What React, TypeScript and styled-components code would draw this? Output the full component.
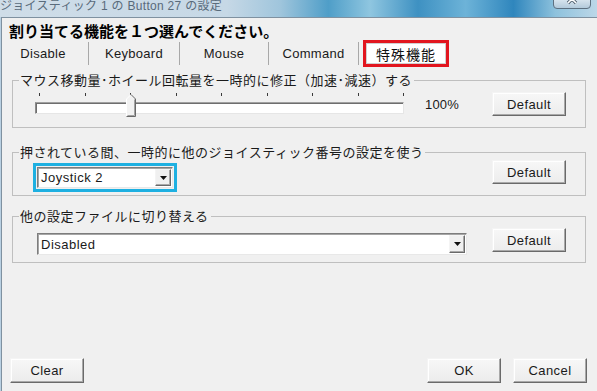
import React from "react";
import styled, { createGlobalStyle } from "styled-components";

const GlobalStyle = createGlobalStyle`
  html, body {
    margin: 0;
    padding: 0;
    background: #f0f0f0;
  }
  body {
    font-family: "Liberation Sans", "Noto Sans CJK JP", sans-serif;
    color: #111;
  }
`;

const Window = styled.div`
  width: 597px;
  height: 391px;
  overflow: hidden;
  display: flex;
  flex-direction: column;
  background: #b9d0e2;
`;

const TitleBar = styled.div`
  height: 17px;
  flex-shrink: 0;
  display: flex;
  align-items: flex-start;
  overflow: hidden;
  background: linear-gradient(
    90deg,
    #cfdde8 0%,
    #c6d8e6 38%,
    #9fc5dc 47%,
    #4f9ec8 55%,
    #8fc6e0 62%,
    #3e91c2 70%,
    #6db3d8 78%,
    #2f86bd 86%,
    #8ec2dd 93%,
    #bcd7e8 100%
  );
`;

const TitleText = styled.div`
  margin-top: 0;
  font-size: 12px;
  line-height: 12px;
  color: #596b7b;
  white-space: nowrap;
  letter-spacing: 0.3px;
`;

const CloseButton = styled.div`
  margin-left: auto;
  margin-right: 6px;
  margin-top: -4px;
  width: 36px;
  height: 11px;
  border: 1px solid #5d7080;
  border-radius: 0 0 4px 4px;
  background: linear-gradient(#e3edf4, #b3cadb);
  display: flex;
  align-items: flex-start;
  justify-content: center;
`;

const Client = styled.div`
  flex: 1;
  min-height: 0;
  display: flex;
  flex-direction: column;
  margin-left: 1px;
  border-left: 1px solid #7f91a0;
  border-top: 1px solid #7f91a0;
  background: #f0f0f0;
`;

const Header = styled.div`
  margin: 3px 0 0 7px;
  height: 19px;
  font-size: 15px;
  line-height: 19px;
  font-weight: bold;
  color: #000;
  font-family: "Noto Sans CJK JP", sans-serif;
`;

const TabStrip = styled.div`
  display: flex;
  align-items: center;
  height: 27px;
  margin-left: -1px;
`;

const Tab = styled.div<{ $w: number; $shift?: number }>`
  width: ${({ $w }) => $w}px;
  height: 23px;
  box-sizing: border-box;
  padding-right: ${({ $shift = 0 }) => $shift}px;
  border-right: 1px solid #a8a8a8;
  display: flex;
  align-items: center;
  justify-content: center;
  font-size: 13px;
  letter-spacing: 0.3px;
  color: #1a1a1a;
`;

const SelectedTab = styled.div`
  margin-left: 4px;
  width: 86px;
  height: 27px;
  box-sizing: border-box;
  border: 3px solid #e2161f;
  background: #fff;
  box-shadow: inset 0 0 0 1px #d0d0d0;
  display: flex;
  align-items: center;
  justify-content: center;
  font-family: "Noto Sans CJK JP", sans-serif;
  font-size: 14px;
  letter-spacing: 1px;
  color: #111;
`;

const Group = styled.fieldset<{ $mt: number; $pt: number; $pb: number }>`
  margin: ${({ $mt }) => $mt}px 11px 0 10px;
  padding: ${({ $pt }) => $pt}px 19px ${({ $pb }) => $pb}px 0;
  border: 1px solid #bfbfbf;
  min-width: 0;
`;

const Legend = styled.legend`
  margin-left: 6px;
  padding: 0 2px 0 1px;
  font-family: "Noto Sans CJK JP", sans-serif;
  font-size: 13px;
  line-height: 16px;
  letter-spacing: 0.5px;
  color: #1a1a1a;
`;

const Row = styled.div<{ $h: number }>`
  display: flex;
  align-items: flex-start;
  height: ${({ $h }) => $h}px;
`;

const Slider = styled.div`
  position: relative;
  width: 369px;
  height: 24px;
  margin: 1px 0 0 22px;
`;

const Ticks = styled.div`
  display: flex;
  justify-content: space-between;
  margin-left: 4px;
  height: 3px;
`;

const Tick = styled.span`
  width: 1px;
  height: 3px;
  background: #3a3a3a;
`;

const Track = styled.div`
  margin-top: 6px;
  height: 12px;
  box-sizing: border-box;
  background: #fff;
  border: 1px solid;
  border-color: #a0a0a0 #e6e6e6 #e6e6e6 #8a8a8a;
  box-shadow: inset 1px 1px #6e6e6e;
`;

const Thumb = styled.div`
  position: absolute;
  left: 91px;
  top: 1px;
  width: 10px;
  height: 23px;
  line-height: 0;
`;

const Percent = styled.div`
  margin-left: 21px;
  line-height: 25px;
  font-size: 13px;
  letter-spacing: 0.2px;
  color: #1a1a1a;
`;

const Button = styled.button<{ $h?: number; $mt?: number }>`
  width: 74px;
  height: ${({ $h = 24 }) => $h}px;
  margin-top: ${({ $mt = 0 }) => $mt}px;
  box-sizing: border-box;
  padding: 0;
  font-family: "Liberation Sans", sans-serif;
  font-size: 13px;
  font-weight: 400;
  letter-spacing: 0.4px;
  color: #1a1a1a;
  background: linear-gradient(#f7f7f7, #ececec);
  border: 1px solid;
  border-color: #f4f4f4 #6a6a6a #6a6a6a #f4f4f4;
  box-shadow: inset -1px -1px #a9a9a9, inset 1px 1px #fff;
`;

const PushRight = styled.div`
  margin-left: auto;
  display: flex;
`;

const Highlight = styled.div`
  margin: 3px 0 0 20px;
  padding: 1px;
  border: 3px solid #1eb0e1;
`;

const Combo = styled.div<{ $w: number; $h: number; $ml?: number; $mt?: number }>`
  width: ${({ $w }) => $w}px;
  height: ${({ $h }) => $h}px;
  margin-left: ${({ $ml = 0 }) => $ml}px;
  margin-top: ${({ $mt = 0 }) => $mt}px;
  box-sizing: border-box;
  display: flex;
  align-items: center;
  padding: 1px 1px 1px 3px;
  background: #fff;
  border: 1px solid;
  border-color: #7d7d7d #e8e8e8 #e8e8e8 #7d7d7d;
  box-shadow: inset 1px 1px #a6a6a6;
  font-size: 13px;
  letter-spacing: 0.5px;
  color: #1a1a1a;
`;

const ComboValue = styled.span`
  flex: 1;
  white-space: nowrap;
`;

const ComboArrow = styled.div`
  width: 16px;
  height: 100%;
  box-sizing: border-box;
  display: flex;
  align-items: center;
  justify-content: center;
  background: #f0f0f0;
  border: 1px solid;
  border-color: #f4f4f4 #6a6a6a #6a6a6a #f4f4f4;
  box-shadow: inset -1px -1px #a9a9a9;
`;

const Filler = styled.div`
  flex: 1;
`;

const BottomBar = styled.div`
  display: flex;
  align-items: flex-end;
  padding: 0 10px 8px 8px;
  gap: 12px;
`;

const Arrow = () => (
  <svg width="7" height="4" viewBox="0 0 7 4">
    <path d="M0 0 H7 L3.5 4 Z" fill="#111" />
  </svg>
);

const tabs = [
  { label: "Disable", w: 88, shift: 3 },
  { label: "Keyboard", w: 91 },
  { label: "Mouse", w: 89 },
  { label: "Command", w: 90 },
];

export default function App() {
  return (
    <>
      <GlobalStyle />
      <Window>
        <TitleBar>
          <TitleText>ジョイスティック 1 の Button 27 の設定</TitleText>
          <CloseButton>
            <svg width="12" height="8" viewBox="0 0 12 8">
              <path d="M2 -2 L10 6 M10 -2 L2 6" stroke="#4a5a68" strokeWidth="3.2" />
              <path d="M2 -2 L10 6 M10 -2 L2 6" stroke="#fff" strokeWidth="1.6" />
            </svg>
          </CloseButton>
        </TitleBar>
        <Client>
          <Header>割り当てる機能を１つ選んでください。</Header>

          <TabStrip>
            {tabs.map((t) => (
              <Tab key={t.label} $w={t.w} $shift={t.shift}>
                {t.label}
              </Tab>
            ))}
            <SelectedTab>特殊機能</SelectedTab>
          </TabStrip>

          <Group $mt={5} $pt={4} $pb={10}>
            <Legend>マウス移動量･ホイール回転量を一時的に修正（加速･減速）する</Legend>
            <Row $h={25}>
              <Slider>
                <Ticks>
                  {Array.from({ length: 9 }).map((_, i) => (
                    <Tick key={i} />
                  ))}
                </Ticks>
                <Track />
                <Thumb>
                  <svg width="10" height="23" viewBox="0 0 10 23">
                    <path d="M0.5 22.5 V5 L5 0.5 L9.5 5 V22.5 Z" fill="#f2f2f2" />
                    <path d="M0.5 22 V5 L5 0.5" stroke="#fff" fill="none" />
                    <path d="M5 0.5 L9.5 5 V22.5 H0.5" stroke="#696969" fill="none" />
                    <path d="M8.5 5.5 V21.5 H1.5" stroke="#a3a3a3" fill="none" />
                  </svg>
                </Thumb>
              </Slider>
              <Percent>100%</Percent>
              <PushRight>
                <Button $h={24}>Default</Button>
              </PushRight>
            </Row>
          </Group>

          <Group $mt={16} $pt={0} $pb={3}>
            <Legend>押されている間、一時的に他のジョイスティック番号の設定を使う</Legend>
            <Row $h={32}>
              <Highlight>
                <Combo $w={136} $h={21}>
                  <ComboValue>Joystick 2</ComboValue>
                  <ComboArrow>
                    <Arrow />
                  </ComboArrow>
                </Combo>
              </Highlight>
              <PushRight>
                <Button $h={24}>Default</Button>
              </PushRight>
            </Row>
          </Group>

          <Group $mt={12} $pt={0} $pb={7}>
            <Legend>他の設定ファイルに切り替える</Legend>
            <Row $h={31}>
              <Combo $w={430} $h={22} $ml={24} $mt={9}>
                <ComboValue>Disabled</ComboValue>
                <ComboArrow>
                  <Arrow />
                </ComboArrow>
              </Combo>
              <PushRight>
                <Button $h={24} $mt={4}>
                  Default
                </Button>
              </PushRight>
            </Row>
          </Group>

          <Filler />

          <BottomBar>
            <Button $h={25}>Clear</Button>
            <PushRight>
              <Button $h={25}>OK</Button>
            </PushRight>
            <Button $h={25}>Cancel</Button>
          </BottomBar>
        </Client>
      </Window>
    </>
  );
}
